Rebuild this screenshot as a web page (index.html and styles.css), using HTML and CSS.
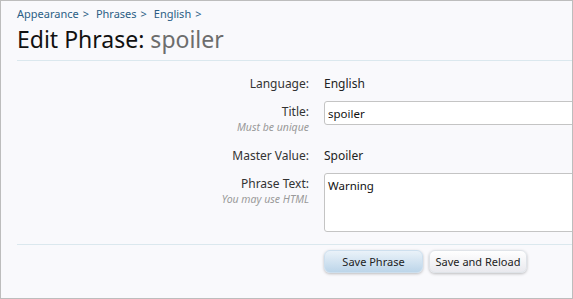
FILE: index.html
```html
<!DOCTYPE html>
<html lang="en">
<head>
  <meta charset="UTF-8" />
  <title>Edit Phrase: spoiler</title>
  <link rel="stylesheet" href="styles.css">
</head>
<body>
  <div id="frame">
    <div class="breadcrumb">
      <a href="#">Appearance</a><span class="arrow">&gt;</span>
      <a href="#">Phrases</a><span class="arrow">&gt;</span>
      <a href="#">English</a><span class="arrow">&gt;</span>
    </div>
    <h1 class="title">Edit Phrase: <span class="muted">spoiler</span></h1>

    <form class="phraseForm">
      <div class="row">
        <div class="label">Language:</div>
        <div class="value">English</div>
      </div>
      <div class="row hasHint">
        <div class="label">Title:<span class="hint">Must be unique</span></div>
        <div class="value"><input type="text" class="textCtrl" value="spoiler"></div>
      </div>
      <div class="row">
        <div class="label">Master Value:</div>
        <div class="value">Spoiler</div>
      </div>
      <div class="row last">
        <div class="label">Phrase Text:<span class="hint">You may use HTML</span></div>
        <div class="value"><textarea class="textCtrl area">Warning</textarea></div>
      </div>

      <div class="submitUnit">
        <button type="button" class="button primary">Save Phrase</button>
        <button type="button" class="button">Save and Reload</button>
      </div>
    </form>
  </div>
</body>
</html>
```

FILE: styles.css
```css
* {
  box-sizing: border-box;
  margin: 0;
  padding: 0;
}

body {
  font-family: 'Noto Sans', 'DejaVu Sans', sans-serif;
  background: #ffffff;
}

#frame {
  width: 573px;
  height: 299px;
  border: 1px solid #bdbdbd;
  background: #f9f9fc;
  overflow: hidden;
  padding: 5px 0 0 16px;
}

.breadcrumb {
  font-size: 11px;
  line-height: 16px;
  color: #2b5e85;
}

.breadcrumb a {
  color: #2b5e85;
  text-decoration: none;
}

.breadcrumb .arrow {
  margin: 0 4px 0 4px;
  color: #2b5e85;
}

.title {
  font-size: 23px;
  font-weight: normal;
  color: #111;
  line-height: 30px;
  margin-top: 2px;
  padding-bottom: 6px;
  border-bottom: 1px solid #dbe8ee;
}

.title .muted {
  color: #6d6d6d;
}

.phraseForm {
  padding-top: 12px;
}

.row {
  display: grid;
  grid-template-columns: 292px 1fr;
  column-gap: 15px;
  font-size: 12px;
  color: #222;
  margin-bottom: 6px;
}

.row.hasHint {
  margin-bottom: 13px;
}

.row.last {
  margin-bottom: 12px;
}

.label {
  text-align: right;
  line-height: 22px;
  color: #333;
}

.value {
  line-height: 22px;
}

.hint {
  display: block;
  font-size: 10.5px;
  font-style: italic;
  color: #9a9a9a;
  line-height: 9px;
}

.textCtrl {
  display: block;
  width: 300px;
  height: 24px;
  border: 1px solid #c4c4c4;
  border-radius: 3px;
  background: #fff;
  font: inherit;
  font-size: 11.5px;
  line-height: 16px;
  color: #111;
  padding: 3px 3px;
}

.area {
  height: 59px;
  resize: none;
  padding: 4px 3px;
}

.submitUnit {
  border-top: 1px solid #dbe8ee;
  padding: 5px 0 0 307px;
  display: flex;
  gap: 6px;
}

.button {
  font: inherit;
  font-size: 11px;
  color: #222;
  width: 98px;
  height: 23px;
  padding: 0;
  border: 1px solid #dfe3e8;
  border-radius: 6px;
  background: linear-gradient(#ffffff, #e9e9ee);
  box-shadow: 0 1px 3px rgba(0, 0, 0, 0.25);
}

.button.primary {
  width: 99px;
  background: linear-gradient(#eaf2f9, #bcd5e9);
  border-color: #cddfee;
}
```
